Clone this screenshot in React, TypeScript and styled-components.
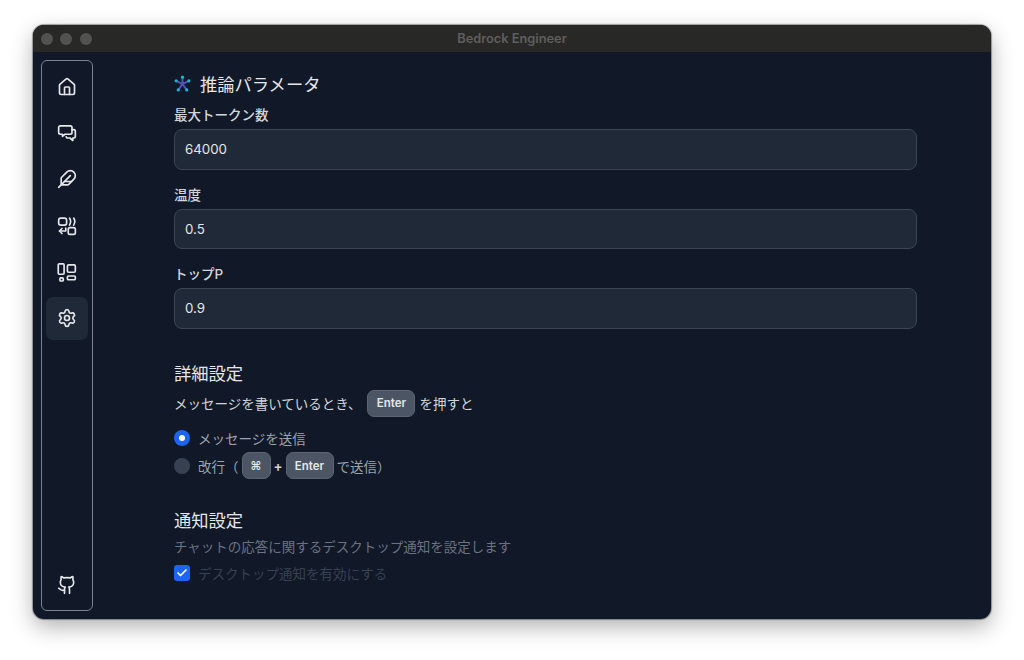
import React from 'react';
import styled, { createGlobalStyle } from 'styled-components';
import { House, Feather, Settings, Github, Check } from 'lucide-react';

const GlobalStyle = createGlobalStyle`
    html, body {
        margin: 0;
        padding: 0;
        background: #ffffff;
    }
    body {
        font-family: Inter, "Noto Sans CJK JP", sans-serif;
    }
`;

const Page = styled.div`
    width: 1024px;
    height: 660px;
    box-sizing: border-box;
    padding: 25px 33px 41px;
    overflow: hidden;
`;

const Window = styled.div`
    height: 100%;
    display: flex;
    flex-direction: column;
    border-radius: 11px;
    overflow: hidden;
    background-color: #111827;
    box-shadow: 0 0 1px 1px rgba(0, 0, 0, 0.35), 0 8px 22px rgba(0, 0, 0, 0.3);
`;

const TitleBar = styled.div`
    height: 27px;
    flex-shrink: 0;
    display: flex;
    align-items: center;
    justify-content: center;
    position: relative;
    background-color: #282826;
`;

const Lights = styled.div`
    position: absolute;
    left: 7.5px;
    top: 8px;
    display: flex;
    gap: 7.5px;
`;

const Light = styled.span`
    width: 12px;
    height: 12px;
    border-radius: 50%;
    background-color: #525250;
`;

const Title = styled.span`
    font-size: 12.8px;
    font-weight: 600;
    color: #5f5f5d;
`;

const Body = styled.div`
    flex: 1;
    min-height: 0;
    display: flex;
    padding: 8px 74px 8px 8px;
`;

const Sidebar = styled.nav`
    width: 52px;
    box-sizing: border-box;
    flex-shrink: 0;
    display: flex;
    flex-direction: column;
    justify-content: space-between;
    align-items: center;
    padding: 4px 3px;
    border: 1px solid #7b8494;
    border-radius: 6px;
`;

const NavList = styled.div`
    display: flex;
    flex-direction: column;
    gap: 3.4px;
`;

const NavItem = styled.div<{ $active?: boolean }>`
    width: 42px;
    height: 43px;
    display: flex;
    align-items: center;
    justify-content: center;
    border-radius: 7px;
    color: #e5e7eb;
    background-color: ${(p) => (p.$active ? '#1f2937' : 'transparent')};
`;

const Content = styled.main`
    flex: 1;
    min-width: 0;
    padding: 9px 0 0 81px;
`;

const MainHeading = styled.h2`
    margin: 0;
    display: flex;
    align-items: center;
    gap: 9px;
    height: 29px;
    font-size: 17.3px;
    font-weight: 400;
    color: #e5e7eb;
`;

const Field = styled.div`
    margin-top: 7px;
    margin-bottom: 15px;
    &:last-of-type {
        margin-bottom: 0;
    }
`;

const FieldLabel = styled.label`
    display: block;
    height: 20px;
    line-height: 20px;
    margin-bottom: 4px;
    font-size: 13.5px;
    font-weight: 500;
    color: #d1d5db;
`;

const Input = styled.input`
    display: block;
    width: 100%;
    height: 40.5px;
    box-sizing: border-box;
    padding: 0 10px;
    border: 1px solid #3b4553;
    border-radius: 8px;
    background-color: #1f2937;
    outline: none;
    font-family: inherit;
    font-size: 13.3px;
    color: #e5e7eb;
`;

const Section = styled.section<{ $top: number }>`
    margin-top: ${(p) => p.$top}px;
`;

const SectionHeading = styled.h3`
    margin: 0;
    height: 26px;
    line-height: 26px;
    font-size: 17.3px;
    font-weight: 400;
    color: #e5e7eb;
`;

const Key = styled.kbd<{ $compact?: boolean }>`
    display: inline-flex;
    align-items: center;
    justify-content: center;
    box-sizing: border-box;
    width: ${(p) => (p.$compact ? '29px' : '48px')};
    height: 27px;
    margin: 0 3px;
    border: 1px solid #5b6472;
    border-radius: 7px;
    background-color: #4b5563;
    font-family: inherit;
    font-size: 11.5px;
    font-weight: 600;
    color: #e5e7eb;
`;

const SendHint = styled.div`
    margin: 2.5px 0 6.5px;
    display: flex;
    align-items: center;
    height: 28px;
    font-size: 13.5px;
    color: #d1d5db;
    ${Key} {
        margin: 0 4px 0 6px;
    }
`;

const Plus = styled.span`
    width: 9px;
    text-align: center;
    font-weight: 600;
    color: #d1d5db;
`;

const RadioRow = styled.div`
    display: flex;
    align-items: center;
    gap: 8px;
    height: 28px;
`;

const Radio = styled.span<{ $checked?: boolean }>`
    width: 16px;
    height: 16px;
    border-radius: 50%;
    flex-shrink: 0;
    background-color: ${(p) => (p.$checked ? '#1c64f2' : '#374151')};
    display: flex;
    align-items: center;
    justify-content: center;
    &::after {
        content: '';
        width: 6px;
        height: 6px;
        border-radius: 50%;
        background-color: #ffffff;
        display: ${(p) => (p.$checked ? 'block' : 'none')};
    }
`;

const OptionText = styled.span`
    display: inline-flex;
    align-items: center;
    font-size: 13.5px;
    color: #9ca3af;
`;

const Description = styled.p`
    margin: 3px 0 0;
    line-height: 20px;
    font-size: 13.5px;
    color: #6b7280;
`;

const CheckRow = styled.div`
    margin-top: 6px;
    display: flex;
    align-items: center;
    gap: 8px;
`;

const CheckBox = styled.span`
    width: 16px;
    height: 16px;
    border-radius: 3px;
    flex-shrink: 0;
    display: flex;
    align-items: center;
    justify-content: center;
    background-color: #1c64f2;
    color: #ffffff;
`;

const DisabledText = styled.span`
    font-size: 13.5px;
    color: #374151;
`;

const AgentIcon = () => (
    <svg width="17" height="17" viewBox="0 0 16 16" fill="none" strokeLinecap="round">
        <path d="M8 8.500V2M8 8.500L2 5.500M8 8.500l6-3M8 8.500l-4 5.500M8 8.500l4 5.500" stroke="#4f55b5" strokeWidth="1.900" />
        <g fill="#1cb4d2">
            <circle cx="8" cy="2" r="1.500" />
            <circle cx="2" cy="5.500" r="1.500" />
            <circle cx="14" cy="5.500" r="1.500" />
            <circle cx="4" cy="14" r="1.500" />
            <circle cx="12" cy="14" r="1.500" />
        </g>
    </svg>
);

const ChatIcon = () => (
    <svg width="20" height="20" viewBox="0 0 24 24" fill="none" stroke="currentColor" strokeWidth="2" strokeLinecap="round" strokeLinejoin="round">
        <path d="M4 3.500h12a2 2 0 0 1 2 2v6a2 2 0 0 1-2 2H9.500l-3 2.500v-2.500H4a2 2 0 0 1-2-2v-6a2 2 0 0 1 2-2z" />
        <path d="M18 8h2a2 2 0 0 1 2 2v6a2 2 0 0 1-2 2h-1v3l-3.500-3H13a2 2 0 0 1-2-1.500" />
    </svg>
);

const SwapIcon = () => (
    <svg width="20" height="20" viewBox="0 0 24 24" fill="none" stroke="currentColor" strokeWidth="2" strokeLinecap="round" strokeLinejoin="round">
        <rect x="2" y="2.500" width="9.500" height="8.500" rx="2.500" />
        <path d="M15 2.500c1.600 2.400 1.600 6 0 8.500" />
        <path d="M20 2.500c1.600 2.400 1.600 6 0 8.500" />
        <rect x="13.500" y="14" width="8.500" height="8" rx="2" />
        <path d="M10.500 14.500v3.500H3" />
        <path d="M6 15l-3 3 3 3" />
    </svg>
);

const PanelsIcon = () => (
    <svg width="20" height="20" viewBox="0 0 24 24" fill="none" stroke="currentColor" strokeWidth="2" strokeLinecap="round" strokeLinejoin="round">
        <rect x="1.500" y="2.200" width="7" height="12.500" rx="1.200" />
        <rect x="3.500" y="19" width="4" height="3.800" rx="1" />
        <rect x="12.500" y="3.500" width="9.500" height="8.800" rx="1.500" />
        <rect x="12.500" y="16.800" width="9.500" height="4.500" rx="1.200" />
    </svg>
);

const navItems = [
    { key: 'home', icon: <House size={20} /> },
    { key: 'chat', icon: <ChatIcon /> },
    { key: 'write', icon: <Feather size={20} /> },
    { key: 'swap', icon: <SwapIcon /> },
    { key: 'panels', icon: <PanelsIcon /> },
    { key: 'settings', icon: <Settings size={20} />, active: true },
];

const fields = [
    { label: '最大トークン数', value: '64000' },
    { label: '温度', value: '0.5' },
    { label: 'トップP', value: '0.9' },
];

const App = () => (
    <Page>
        <GlobalStyle />
        <Window>
            <TitleBar>
                <Lights>
                    <Light />
                    <Light />
                    <Light />
                </Lights>
                <Title>Bedrock Engineer</Title>
            </TitleBar>
            <Body>
                <Sidebar>
                    <NavList>
                        {navItems.map((item) => (
                            <NavItem key={item.key} $active={item.active}>
                                {item.icon}
                            </NavItem>
                        ))}
                    </NavList>
                    <NavItem>
                        <Github size={20} />
                    </NavItem>
                </Sidebar>
                <Content>
                    <MainHeading>
                        <AgentIcon />
                        推論パラメータ
                    </MainHeading>
                    {fields.map((field) => (
                        <Field key={field.label}>
                            <FieldLabel>{field.label}</FieldLabel>
                            <Input type="text" defaultValue={field.value} />
                        </Field>
                    ))}

                    <Section $top={32}>
                        <SectionHeading>詳細設定</SectionHeading>
                        <SendHint>
                            メッセージを書いているとき、
                            <Key>Enter</Key>
                            を押すと
                        </SendHint>
                        <RadioRow>
                            <Radio $checked />
                            <OptionText>メッセージを送信</OptionText>
                        </RadioRow>
                        <RadioRow>
                            <Radio />
                            <OptionText>
                                改行（<Key $compact>⌘</Key>
                                <Plus>+</Plus>
                                <Key>Enter</Key>で送信）
                            </OptionText>
                        </RadioRow>
                    </Section>

                    <Section $top={28}>
                        <SectionHeading>通知設定</SectionHeading>
                        <Description>チャットの応答に関するデスクトップ通知を設定します</Description>
                        <CheckRow>
                            <CheckBox>
                                <Check size={12} strokeWidth={3.5} />
                            </CheckBox>
                            <DisabledText>デスクトップ通知を有効にする</DisabledText>
                        </CheckRow>
                    </Section>
                </Content>
            </Body>
        </Window>
    </Page>
);

export default App;
